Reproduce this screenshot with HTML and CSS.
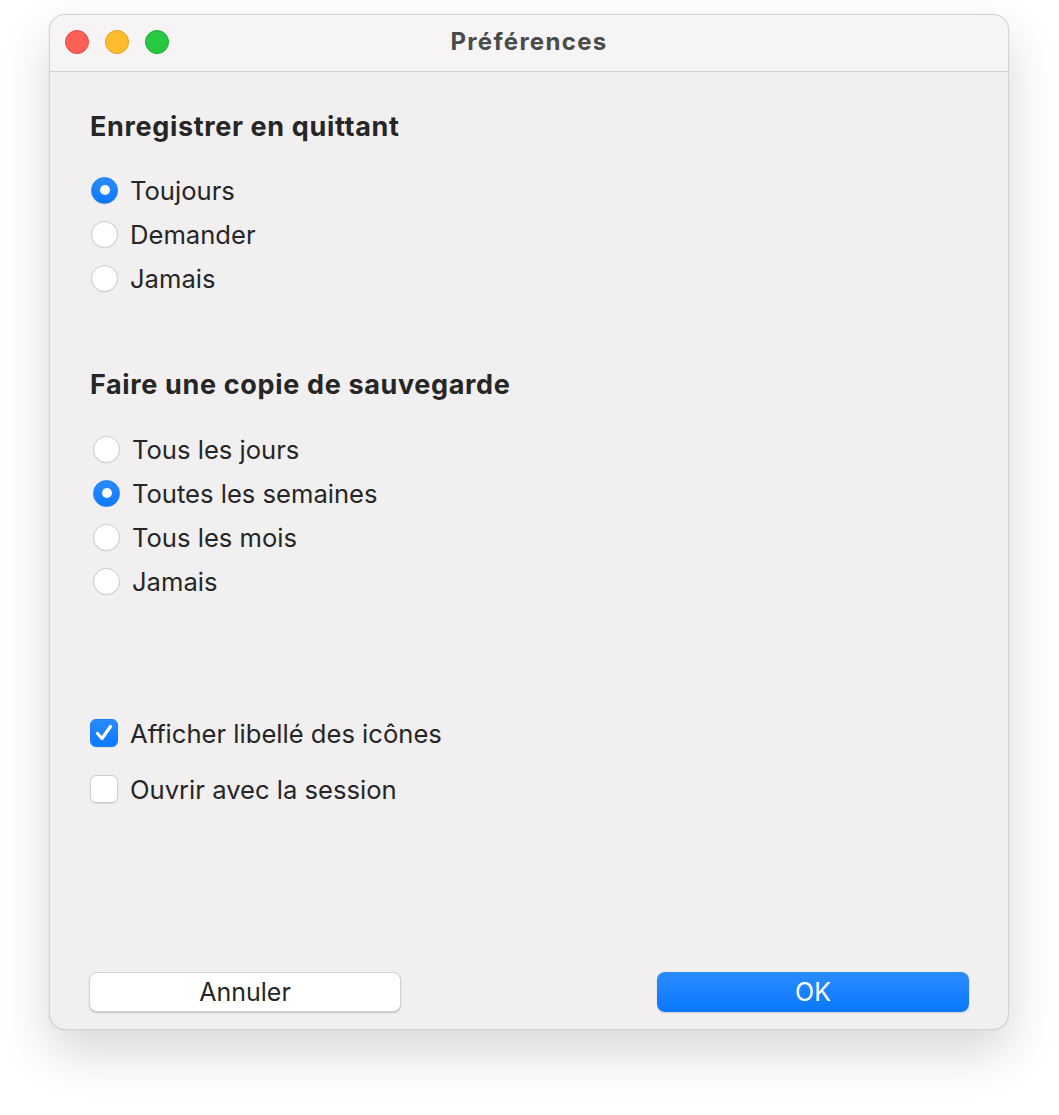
FILE: index.html
```html
<!DOCTYPE html>
<html lang="fr">
<head>
<meta charset="utf-8">
<title>Préférences</title>
<link rel="stylesheet" href="styles.css">
</head>
<body>
<div class="stage">
  <div class="window">
    <div class="titlebar">
      <div class="lights">
        <span class="light red"></span>
        <span class="light yellow"></span>
        <span class="light green"></span>
      </div>
      <div class="title">Préférences</div>
    </div>
    <div class="content">
      <h2 class="heading">Enregistrer en quittant</h2>
      <div class="group group-a">
        <div class="row"><span class="radio on"></span><span class="label">Toujours</span></div>
        <div class="row"><span class="radio"></span><span class="label">Demander</span></div>
        <div class="row"><span class="radio"></span><span class="label">Jamais</span></div>
      </div>
      <h2 class="heading heading-b">Faire une copie de sauvegarde</h2>
      <div class="group group-b">
        <div class="row"><span class="radio"></span><span class="label">Tous les jours</span></div>
        <div class="row"><span class="radio on"></span><span class="label">Toutes les semaines</span></div>
        <div class="row"><span class="radio"></span><span class="label">Tous les mois</span></div>
        <div class="row"><span class="radio"></span><span class="label">Jamais</span></div>
      </div>
      <div class="checks">
        <div class="crow"><span class="check on"><svg viewBox="0 0 28 28" width="28" height="28"><path d="M7.5 14.5 L12 19.5 L20.5 7.5" fill="none" stroke="#fff" stroke-width="3.2" stroke-linecap="round" stroke-linejoin="round"/></svg></span><span class="label">Afficher libellé des icônes</span></div>
        <div class="crow"><span class="check"></span><span class="label">Ouvrir avec la session</span></div>
      </div>
      <div class="buttons">
        <button class="btn btn-cancel">Annuler</button>
        <button class="btn btn-ok">OK</button>
      </div>
    </div>
  </div>
</div>
</body>
</html>
```
FILE: styles.css
```css
html, body {
  margin: 0;
  padding: 0;
  background: #ffffff;
}
body {
  font-family: "Inter", "Noto Sans", "Liberation Sans", sans-serif;
  color: #262626;
}
.stage {
  padding: 14px 0 0 49px;
  width: 1059px;
  height: 1115px;
  box-sizing: border-box;
}
.window {
  width: 960px;
  height: 1016px;
  box-sizing: border-box;
  border: 1px solid #d6d4d5;
  border-radius: 16px;
  background: #f1eff0;
  box-shadow: 0 22px 50px rgba(0, 0, 0, 0.16), 0 0 1px rgba(0,0,0,0.2);
  display: flex;
  flex-direction: column;
  overflow: hidden;
}
.titlebar {
  height: 56px;
  flex: none;
  background: #f6f4f5;
  border-bottom: 1px solid #d2d0d1;
  display: flex;
  align-items: center;
  position: relative;
}
.lights {
  display: flex;
  gap: 16px;
  padding-left: 15px;
  margin-top: -2px;
}
.light {
  width: 24px;
  height: 24px;
  border-radius: 50%;
  box-sizing: border-box;
}
.red { background: #fe5f57; border: 1px solid #e2463f; }
.yellow { background: #febc2e; border: 1px solid #e1a116; }
.green { background: #28c840; border: 1px solid #14ae2a; }
.title {
  position: absolute;
  left: 0;
  right: 0;
  top: 12px;
  line-height: 30px;
  text-align: center;
  font-weight: 700;
  font-size: 24px;
  color: #4b4b4b;
  letter-spacing: 1.3px;
}
.content {
  flex: 1;
  display: flex;
  flex-direction: column;
  padding: 40px 39px 17px 40px;
}
.heading {
  margin: 0;
  font-size: 27px;
  line-height: 30px;
  font-weight: 700;
  color: #262626;
  letter-spacing: 0.65px;
}
.heading-b {
  margin-top: 70px;
}
.group-a {
  margin-top: 26px;
}
.group-b {
  margin-top: 27px;
  padding-left: 2px;
}
.row {
  height: 44px;
  display: flex;
  align-items: center;
}
.radio {
  width: 27px;
  height: 27px;
  margin-left: 1px;
  margin-right: 12px;
  border-radius: 50%;
  background: #ffffff;
  box-sizing: border-box;
  border: 1px solid #cdcbcc;
  box-shadow: 0 0.5px 1px rgba(0,0,0,0.08);
  flex: none;
  display: flex;
  align-items: center;
  justify-content: center;
}
.radio.on {
  background: linear-gradient(#2a8bff, #0b79fe);
  border-color: #1a7ff5;
}
.radio.on::after {
  content: "";
  width: 10px;
  height: 10px;
  border-radius: 50%;
  background: #ffffff;
}
.label {
  font-size: 25.6px;
  letter-spacing: 0;
  color: #262626;
}
.checks {
  margin-top: 102px;
}
.crow {
  height: 56px;
  display: flex;
  align-items: center;
}
.check {
  width: 28px;
  height: 28px;
  margin-left: 0;
  margin-right: 12px;
  box-sizing: border-box;
  border-radius: 6px;
  background: #ffffff;
  border: 1px solid #cdcbcc;
  box-shadow: 0 0.5px 1px rgba(0,0,0,0.08);
  flex: none;
  display: flex;
}
.check.on {
  background: linear-gradient(#2a8bff, #0b79fe);
  border-color: #1a7ff5;
}
.check svg {
  margin: -1px;
}
.buttons {
  margin-top: auto;
  display: flex;
  justify-content: space-between;
  margin-left: -1px;
}
.btn {
  width: 312px;
  height: 40px;
  border-radius: 8px;
  font-family: "Inter", "Noto Sans", "Liberation Sans", sans-serif;
  font-size: 25px;
  padding: 0;
  cursor: default;
}
.btn-cancel {
  background: #ffffff;
  color: #262626;
  border: 1px solid #d4d2d3;
  box-shadow: 0 1px 1.5px rgba(0,0,0,0.2);
}
.btn-ok {
  background: linear-gradient(#2b8cff, #0a78ff);
  color: #ffffff;
  border: none;
  box-shadow: 0 1px 1.5px rgba(0,0,0,0.15);
}
```
